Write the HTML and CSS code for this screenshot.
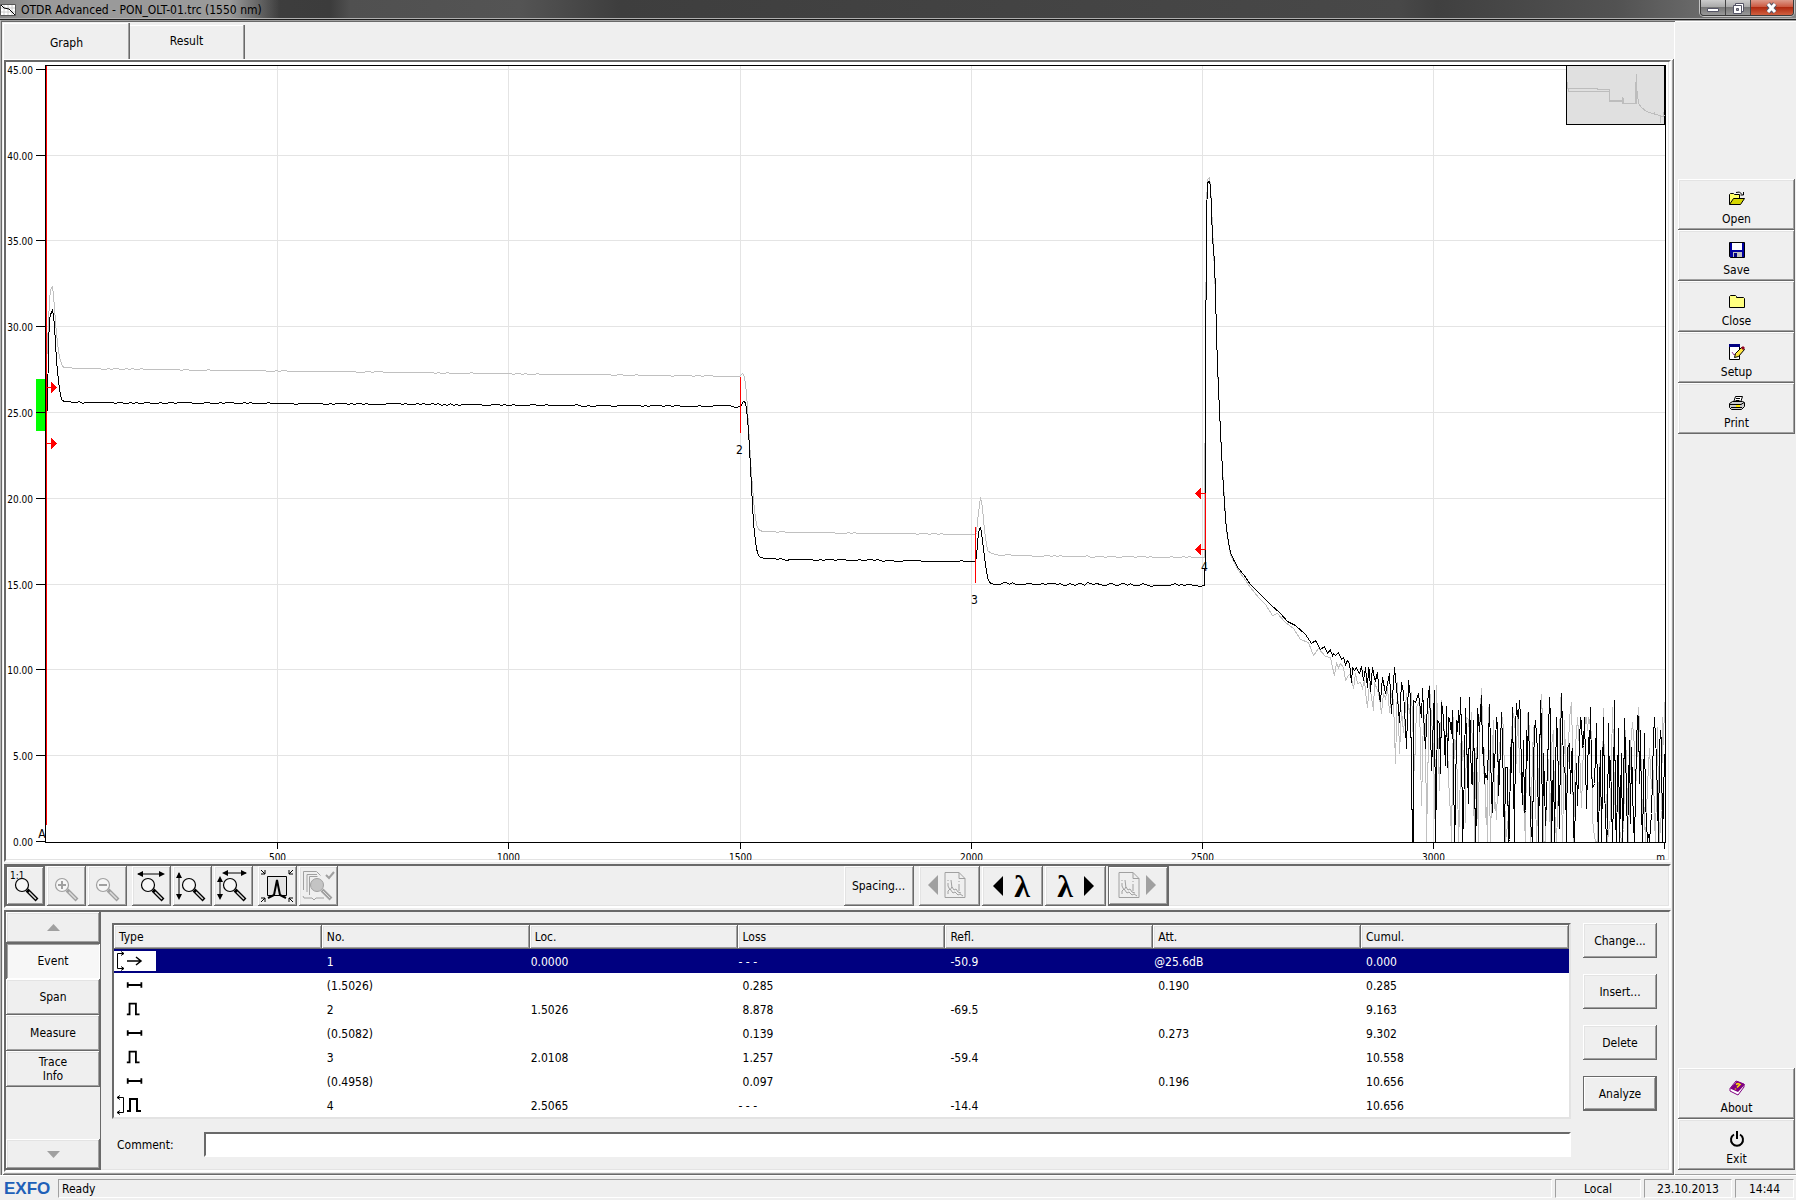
FILE: index.html
```html
<!DOCTYPE html>
<html lang="en">
<head>
<meta charset="utf-8">
<title>OTDR Advanced - PON_OLT-01.trc (1550 nm)</title>
<link rel="stylesheet" href="styles.css">
</head>
<body>
<svg class="defs" width="0" height="0" aria-hidden="true">
  <symbol id="lens" viewBox="0 0 34 34">
    <circle cx="15" cy="15" r="6.500" fill="#f6f6f6" stroke="currentColor" stroke-width="1.200"/>
    <path d="M20 20l10 10" stroke="currentColor" stroke-width="4"/>
    <path d="M22 22l7 7" stroke="#ddd" stroke-width="1.500"/>
  </symbol>
  <symbol id="trace-page" viewBox="0 0 24 28">
    <path d="M2 1.500h14l6 6v19H2zM16 1.500v6h6" fill="none" stroke="currentColor"/>
    <path d="M5 9v1M16 10v1M5 12v3l2 4 2-3 2 3 2-1 2 3 3 1M5 23v-3l2-2 3 4 2-1 3 3 2-1 3 2M8 9l1 8M16 13v7" fill="none" stroke="currentColor"/>
  </symbol>
  <symbol id="span" viewBox="0 0 44 22"><path d="M14 8v6M29 8v6M14 11h15" fill="none" stroke="currentColor" stroke-width="2"/></symbol>
  <symbol id="pulse" viewBox="0 0 44 22"><path d="M13 17h3V5h7v12h4" fill="none" stroke="currentColor" stroke-width="2"/></symbol>
</svg>
<div class="window">
  <header class="titlebar">
    <svg class="app-icon" viewBox="0 0 16 12"><path fill="#fff" stroke="#555" d="M.5.5h15v11H.5z"/><path d="M4 1v10M8 1v10M12 1v10M1 4h14M1 8h14" stroke="#ccc"/><path d="M1 1l3 3 5 1 3 3 3 3" fill="none" stroke="#000"/></svg>
    <h1>OTDR Advanced - PON_OLT-01.trc (1550 nm)</h1>
    <div class="controls">
      <button aria-label="Minimize"><svg viewBox="0 0 24 14"><path d="M6.500 7.500h11v3h-11z" fill="#fff" stroke="#555566"/></svg></button>
      <button aria-label="Restore"><svg viewBox="0 0 24 14"><path d="M9.500 2.500h8v8h-8z" fill="#fff" stroke="#555566"/><path d="M7.500 4.500h8v8h-8z" fill="#fff" stroke="#555566"/><path d="M10.500 7.500h2v2h-2z" fill="#999" stroke="#555566"/></svg></button>
      <button class="close" aria-label="Close window"><svg viewBox="0 0 24 14"><path d="M8 3l7 8M15 3l-7 8" stroke="#555566" stroke-width="5"/><path d="M8 3l7 8M15 3l-7 8" stroke="#fff" stroke-width="3"/></svg></button>
    </div>
  </header>

  <div class="workspace">
    <main>
      <nav class="tabs">
        <button class="tab active">Graph</button>
        <button class="tab">Result</button>
      </nav>
      <div class="sheet">
        <section class="panel chart"><svg id="chart" role="img" aria-label="Trace graph"></svg></section>

        <section class="panel toolbar">
          <div class="tools">
            <button class="btn tool default" aria-label="Zoom 1:1"><svg viewBox="0 0 38 38"><text x="4" y="12" font-size="10">1:1</text><use href="#lens" x="1" y="3" width="34" height="34"/></svg></button>
            <button class="btn tool off" aria-label="Zoom in"><svg viewBox="0 0 38 38"><use href="#lens" y="3" width="34" height="34"/><path d="M11 18h8M15 14v8" stroke="currentColor" stroke-width="2"/></svg></button>
            <button class="btn tool off" aria-label="Zoom out"><svg viewBox="0 0 38 38"><use href="#lens" y="3" width="34" height="34"/><path d="M11 18h8" stroke="currentColor" stroke-width="2"/></svg></button>
          </div>
          <div class="tools">
            <button class="btn tool" aria-label="Horizontal zoom"><svg viewBox="0 0 38 38"><use href="#lens" x="1" y="3" width="34" height="34"/><path d="M6 7h25" stroke="#000"/><path d="M5 7l6-3v6zM33 7l-6-3v6z"/></svg></button>
            <button class="btn tool" aria-label="Vertical zoom"><svg viewBox="0 0 38 38"><use href="#lens" x="1" y="3" width="34" height="34"/><path d="M6 6v25" stroke="#000"/><path d="M6 5l-3 6h6zM6 33l-3-6h6z"/></svg></button>
            <button class="btn tool" aria-label="Area zoom"><svg viewBox="0 0 38 38"><use href="#lens" x="1" y="3" width="34" height="34"/><path d="M6 11v20M10 6h22" stroke="#000"/><path d="M6 9l-3 6h6zM6 33l-3-6h6zM8 6l6-3v6zM33 6l-6-3v6z"/></svg></button>
          </div>
          <div class="tools">
            <button class="btn tool" aria-label="Zoom on event"><svg viewBox="0 0 38 38"><path d="M9.500 9.500h19v19h-19z" fill="#e4e4e4" stroke="#000"/><path d="M10 31l6-3 3-15 3 15 6 3" fill="none" stroke="#000" stroke-width="2"/><path d="M3 3l4 4M7 3v4H3M35 3l-4 4M31 3v4h4M3 35l4-4M7 35v-4H3M35 35l-4-4M31 35v-4h4" fill="none" stroke="#000"/></svg></button>
            <button class="btn tool off" aria-label="Check traces"><svg viewBox="0 0 38 38"><path d="M4.500 23V4.500h13l4 4M8 25V7.500h10M10.500 28V9.500h8M4 29l1 2h8l2 2 2-2h8" fill="none" stroke="currentColor"/><circle cx="18" cy="18" r="6.500" fill="#c4c4c4" stroke="currentColor"/><path d="M23 23l9 9" stroke="currentColor" stroke-width="4"/><path d="M24 24l7 7" stroke="#ddd"/><path d="M27 8l3 3 5-6" fill="none" stroke="currentColor" stroke-width="2"/></svg></button>
          </div>
          <div class="tools centre">
            <button class="btn spacing">Spacing...</button>
            <button class="btn step off" aria-label="Previous trace"><svg class="arrow" viewBox="0 0 10 20"><path d="M10 0v20L0 10z" fill="currentColor"/></svg><svg class="page"><use href="#trace-page"/></svg></button>
            <button class="btn step wave" aria-label="Previous wavelength"><svg class="arrow" viewBox="0 0 10 20"><path d="M10 0v20L0 10z"/></svg><span class="lambda">λ</span></button>
            <button class="btn step wave" aria-label="Next wavelength"><span class="lambda">λ</span><svg class="arrow" viewBox="0 0 10 20"><path d="M0 0v20l10-10z"/></svg></button>
            <button class="btn step off default" aria-label="Next trace"><svg class="page"><use href="#trace-page"/></svg><svg class="arrow" viewBox="0 0 10 20"><path d="M0 0v20l10-10z" fill="currentColor"/></svg></button>
          </div>
        </section>

        <section class="panel details">
          <nav class="views">
            <button class="btn scroll" aria-label="Scroll up"><svg viewBox="0 0 13 7"><path d="M0 7l6.500-7L13 7z"/></svg></button>
            <button class="btn view selected">Event</button>
            <button class="btn view">Span</button>
            <button class="btn view">Measure</button>
            <button class="btn view">Trace<br>Info</button>
            <button class="btn scroll last" aria-label="Scroll down"><svg viewBox="0 0 13 7"><path d="M0 0h13L6.500 7z"/></svg></button>
          </nav>
          <div class="events">
            <div class="table-frame">
              <table>
                <thead><tr><th>Type</th><th>No.</th><th>Loc.</th><th>Loss</th><th>Refl.</th><th>Att.</th><th>Cumul.</th></tr></thead>
                <tbody>
                  <tr class="selected"><td><svg class="type" viewBox="0 0 42 20"><path d="M10 2.500H3.500v15H10M7 .5l3 2-3 2M7 15.500l3 2-3 2" fill="none" stroke="#000"/><path d="M13 10h14M22 6l5 4-5 4" fill="none" stroke="#000" stroke-width="1.500"/></svg></td><td>1</td><td>0.0000</td><td class="none">- - -</td><td>-50.9</td><td class="at">@25.6dB</td><td>0.000</td></tr>
                  <tr><td><svg class="type"><use href="#span"/></svg></td><td>(1.5026)</td><td></td><td>0.285</td><td></td><td>0.190</td><td>0.285</td></tr>
                  <tr><td><svg class="type"><use href="#pulse"/></svg></td><td>2</td><td>1.5026</td><td>8.878</td><td>-69.5</td><td></td><td>9.163</td></tr>
                  <tr><td><svg class="type"><use href="#span"/></svg></td><td>(0.5082)</td><td></td><td>0.139</td><td></td><td>0.273</td><td>9.302</td></tr>
                  <tr><td><svg class="type"><use href="#pulse"/></svg></td><td>3</td><td>2.0108</td><td>1.257</td><td>-59.4</td><td></td><td>10.558</td></tr>
                  <tr><td><svg class="type"><use href="#span"/></svg></td><td>(0.4958)</td><td></td><td>0.097</td><td></td><td>0.196</td><td>10.656</td></tr>
                  <tr><td><svg class="type" viewBox="0 0 42 20"><path d="M3 2.500h6.500v15H3M6 .5l-3 2 3 2M6 15.500l-3 2 3 2" fill="none" stroke="#000"/><path d="M13 16h3V4h7v12h4" fill="none" stroke="#000" stroke-width="2"/></svg></td><td>4</td><td>2.5065</td><td class="none">- - -</td><td>-14.4</td><td></td><td>10.656</td></tr>
                </tbody>
              </table>
            </div>
            <div class="comment"><label for="comment">Comment:</label><input id="comment" type="text"></div>
          </div>
          <div class="actions">
            <button class="btn">Change...</button>
            <button class="btn">Insert...</button>
            <button class="btn">Delete</button>
            <button class="btn default">Analyze</button>
          </div>
        </section>
      </div>
    </main>

    <aside>
      <button class="btn cmd"><svg viewBox="0 0 16 16"><path d="M.5 13.500v-10l1-1h3l1 1h5v4" fill="#ffff66" stroke="#000"/><path d="M.5 13.500l4-6h11l-4 6z" fill="#d6d600" stroke="#000"/><path d="M7 1.500q4-2 6 2M14.500 1v3h-3" fill="none" stroke="#000"/></svg>Open</button>
      <button class="btn cmd"><svg viewBox="0 0 16 16"><path d="M.5.5h15v15h-14l-1-1z" fill="#0000a0" stroke="#000"/><path d="M3 1h10v7H3z" fill="#fff"/><path d="M4 10h9v5H4z" fill="#c0c0c0"/><path d="M5 11h3v4H5z" fill="#000080"/></svg>Save</button>
      <button class="btn cmd"><svg viewBox="0 0 16 16"><path d="M.5 14.500v-11l1-1h5l1 1v1h7l1 1v9z" fill="#ffff80" stroke="#000"/></svg>Close</button>
      <button class="btn cmd"><svg viewBox="0 0 16 16"><path d="M.5.500h10v15H.5z" fill="#fff" stroke="#000"/><path d="M0 0h11v3H0z" fill="#000080"/><path d="M3 8l2 3 5-5" fill="none" stroke="#a040a0"/><path d="M5.500 13.500l1-4 6-6 3 2-6 7z" fill="#ffe640" stroke="#000"/><path d="M12 4l2-2 2 2-2 2z" fill="#900020"/></svg>Setup</button>
      <button class="btn cmd"><svg viewBox="0 0 16 16"><path d="M4.500 7.500l2-6h7l-2 6z" fill="#fff" stroke="#000"/><path d="M7 3.500h4M6.500 5.500h4" stroke="#000"/><path d="M.5 8.500l3-2h10l2 1v4l-3 3h-10l-2-2z" fill="#ccc" stroke="#000"/><path d="M1 9.500h11l3-2M2 12.500h11" fill="none" stroke="#000"/><path d="M7 10h4v2H7z" fill="#ffe600"/></svg>Print</button>
      <button class="btn cmd bottom"><svg viewBox="0 0 16 16"><path d="M1 8.500L7 1l8 3v3l-6 8-8-4z" fill="#fff" stroke="#800080"/><path d="M1 8.500L8 1l8 3.500-7 7.500z" fill="#800080"/><path d="M7 4.500l2-1 2 1-2 2-1 1M6.500 8.500v1" fill="none" stroke="#ffe600" stroke-width="1.500"/></svg>About</button>
      <button class="btn cmd"><svg viewBox="0 0 16 16"><path d="M5 3.500a6 6 0 1 0 6 0M8 0v8" fill="none" stroke="#000" stroke-width="2"/></svg>Exit</button>
    </aside>
  </div>

  <footer>
    <strong class="brand">EXFO</strong>
    <span class="cell message">Ready</span>
    <span class="cell place">Local</span>
    <span class="cell date">23.10.2013</span>
    <span class="cell time">14:44</span>
  </footer>
</div>
<script src="chart.js"></script>
</body>
</html>
```
FILE: styles.css
```css
:root {
  --face: #efefef;
  --light: #e3e3e3;
  --shade: #a0a0a0;
  --dark: #696969;
  --raised: inset -1px -1px var(--dark), inset 1px 1px #fff, inset -2px -2px var(--shade), inset 2px 2px var(--light);
}
* { box-sizing: border-box; }
body {
  margin: 0;
  font: 12px/16px "DejaVu Sans Condensed", "Noto Sans", sans-serif;
  color: #000;
  background: var(--face);
}
button, input { font: inherit; color: inherit; }
button { border: 0; padding: 0; background: var(--face); }
svg { display: block; }
.defs { position: absolute; }

.window { display: flex; flex-direction: column; min-height: 100vh; }

/* Title bar */
.titlebar {
  display: flex;
  align-items: center;
  height: 20px;
  padding-right: 2px;
  border-bottom: 1px solid #1c1c1c;
  box-shadow: inset 0 -1px #b0b0b0;
  background:
    linear-gradient(90deg, #868686, #9a9a9a 40px, #9a9a9a 230px, transparent 280px),
    linear-gradient(90deg, #444 0, #3c3c3c 330px, #505050 350px, #545454 520px, #3e3e3e 620px, #484848 1400px, #404040 80%, #525252 90%, #858585);
}
.app-icon { width: 16px; height: 12px; }
h1 { margin: 0 0 0 5px; flex: 1; font: inherit; }
.controls {
  display: flex;
  align-self: flex-start;
  height: 16px;
  border: 1px solid #3a3a3a;
  border-top: 0;
  border-radius: 0 0 4px 4px;
  overflow: hidden;
  box-shadow: 0 0 0 1px #c4c4c4;
}
.controls button {
  width: 25px;
  border-right: 1px solid #444;
  background: linear-gradient(#ccc, #aaa 45%, #777 50%, #999);
}
.controls .close { width: 42px; border: 0; background: linear-gradient(#dd9a8a, #cc5a42 45%, #b02a10 50%, #d06040); }
.controls svg { width: 24px; height: 14px; margin: auto; }

/* Main area */
.workspace { flex: 1; display: flex; }
main {
  flex: 1;
  min-width: 0;
  display: flex;
  flex-direction: column;
  padding: 2px 1px 0 3px;
  box-shadow: inset 1px 0 #b4b4b4, inset 0 1px var(--shade), inset 2px 2px var(--dark), inset -1px 0 #fff;
}
.tabs { display: flex; height: 37px; padding-top: 1px; }
.tab { box-shadow: inset -1px 0 var(--dark), inset -2px 0 var(--shade), inset 0 1px #fff; }
.tab.active { width: 127px; padding-top: 4px; box-shadow: inset -1px 0 var(--dark), inset -2px 0 var(--shade), inset 1px 1px #fff; }
.tab:not(.active) { width: 115px; height: 34px; margin-top: 2px; padding: 0 2px 2px 0; }
.sheet {
  flex: 1;
  display: flex;
  flex-direction: column;
  gap: 2px;
  padding: 1px 3px 3px 1px;
  box-shadow: inset -1px -1px var(--dark), inset 1px 1px #fff, inset -2px -2px var(--shade);
}
.panel {
  border: 2px solid;
  border-color: var(--dark) #fff #fff var(--dark);
  box-shadow: inset -1px -1px var(--light);
}
.chart { flex: 1; min-height: 300px; position: relative; background: #fff; overflow: hidden; }
#chart { position: absolute; inset: 0; width: 100%; height: 100%; font-size: 10px; }

.btn { box-shadow: var(--raised); }
.btn.default { box-shadow: inset 0 0 0 1px var(--dark), inset -2px -2px var(--dark), inset 2px 2px #fff, inset -3px -3px var(--shade); }
.off { color: #a0a0a0; }

/* Toolbar */
.toolbar { display: flex; gap: 5px; height: 44px; }
.tools { display: flex; gap: 2px; }
.tools.centre { margin: 0 auto; }
.tool { width: 39px; }
.tool svg { width: 38px; height: 38px; }
.spacing { width: 70px; margin-right: 3px; }
.step { width: 61px; display: flex; align-items: center; justify-content: center; gap: 5px; padding: 0 4px 2px 0; }
.wave { gap: 10px; padding: 0 2px; }
.arrow { width: 10px; height: 20px; }
.page { width: 24px; height: 28px; }
.lambda { width: 18px; font: bold 32px/36px "Liberation Serif", serif; }

/* Event details */
.details { display: flex; height: 262px; }
.views {
  display: flex;
  flex-direction: column;
  width: 95px;
  border-right: 1px solid var(--dark);
  border-bottom: 1px solid var(--dark);
}
.scroll { height: 30px; }
.scroll:first-child { height: 31px; }
.scroll svg { width: 13px; height: 7px; margin: auto; fill: var(--shade); }
.last { margin-top: auto; }
.view { height: 36px; line-height: 14px; }
.view.selected { background: #f7f7f7; box-shadow: inset 1px 1px var(--dark), inset -1px -1px #fff, inset 2px 2px var(--shade); }
.events { flex: 1; min-width: 0; padding: 11px 12px 0 11px; }
.table-frame { border: 2px solid; border-color: var(--dark) var(--light) var(--light) var(--dark); background: #fff; }
table { width: 100%; table-layout: fixed; border-collapse: collapse; }
th { height: 24px; padding: 0 5px; font-weight: normal; text-align: left; background: var(--face); box-shadow: var(--raised); }
td { height: 24px; padding: 2px 0 0 5px; white-space: nowrap; }
td:first-child { padding: 0; }
td:nth-child(3), td.none, td.at { padding-left: 1px; }
tr.selected { color: #fff; background: #000080; }
.type { width: 42px; height: 20px; color: #000; }
.selected .type { background: #fff; }
.comment { display: flex; align-items: center; margin-top: 13px; }
.comment label { width: 92px; padding-left: 5px; }
.comment input { flex: 1; height: 25px; border: 2px solid; border-color: var(--dark) #fff #fff var(--dark); background: #fff; }
.actions { display: flex; flex-direction: column; gap: 16px; width: 86px; padding: 11px 12px 0 0; }
.actions .btn { height: 35px; }

/* Command bar */
aside { display: flex; flex-direction: column; width: 121px; padding: 158px 1px 5px 3px; border-top: 1px solid var(--shade); box-shadow: inset 0 1px #fff, inset 0 -1px var(--shade); }
.cmd { display: flex; flex-direction: column; align-items: center; gap: 4px; height: 51px; padding-top: 12px; }
.cmd svg { width: 16px; height: 16px; }
.bottom { margin-top: auto; }

/* Status bar */
footer { display: flex; align-items: center; gap: 3px; height: 25px; padding: 1px 2px 0 4px; border-top: 1px solid #fff; }
.brand { width: 51px; font: bold 17px/17px "Liberation Sans", sans-serif; color: #2060b8; }
.cell { height: 19px; padding: 1px 3px; text-align: center; border: 1px solid; border-color: var(--shade) #fff #fff var(--shade); }
.message { flex: 1; text-align: left; }
.place { width: 86px; }
.date { width: 88px; }
.time { width: 59px; }
```
FILE: chart.js
```js
const svg = document.getElementById('chart');

// Trace samples, in plot units (1619 wide, 777 high), up to the start of the noise floor.
const trace1550 = [[0,350],[1,341],[2,278],[3,255],[4,249],[5,247],[6,244],[7,250],[8,261],[9,278],[10,295],[11,305],[12,316],[13,323],[14,329],[15,334],[16,335],[18,336],[30,337],[254,338],[694,341],[695,339],[697,336],[699,337],[700,343],[701,353],[702,365],[703,383],[704,402],[705,421],[706,440],[707,457],[708,467],[709,476],[710,483],[711,487],[712,490],[714,492],[719,493],[744,494],[929,496],[930,491],[931,478],[932,468],[933,463],[934,462],[935,467],[937,483],[939,499],[941,512],[943,517],[945,518],[1054,519],[1158,520],[1159,487],[1159,322],[1160,152],[1161,117],[1163,116],[1164,120],[1165,145],[1166,173],[1167,183],[1168,197],[1169,228],[1170,268],[1171,300],[1172,323],[1173,345],[1174,366],[1175,386],[1176,405],[1177,423],[1178,438],[1179,453],[1180,463],[1182,477],[1184,487],[1187,494],[1192,503],[1197,509],[1204,519],[1214,529],[1224,539],[1234,548],[1241,556],[1249,560],[1259,569],[1265,578],[1269,575],[1274,584],[1278,581],[1281,588],[1284,584]];
const traceOther = [[0,300],[3,235],[4,225],[5,222],[6,221],[7,230],[8,242],[9,257],[11,278],[13,292],[16,301],[18,302],[32,303],[114,304],[194,305],[693,311],[694,310],[696,308],[698,311],[700,327],[702,360],[705,409],[708,445],[710,459],[712,464],[716,466],[754,467],[929,469],[930,467],[932,447],[934,432],[936,442],[938,465],[941,485],[945,488],[954,490],[1158,492],[1158,462],[1159,300],[1160,140],[1161,114],[1163,112],[1164,120],[1167,183],[1169,230],[1171,302],[1175,388],[1180,465],[1184,489],[1192,505],[1204,522],[1212,532],[1219,539],[1226,550],[1231,548],[1239,557],[1247,563],[1254,574],[1262,577],[1267,590],[1272,583],[1279,591],[1284,592]];
// Noise floor, at three samples per plot unit, from plot position (1284, 555).
const noise1550 = [0,90,5,105,10,98,15,104,25,95,32,118,38,110,45,132,52,120,57,130,62,185,66,140,72,150,78,140,84,155,88,160,93,137,100,180,104,140,110,200,115,145,118,150,121,212,127,142,131,175,135,180,142,155,148,235,151,240,157,170,164,218,172,190,178,160,184,280,193,142,200,230,206,305,214,185,218,215,224,320,227,383,234,180,240,230,244,464,247,664,248,664,250,240,255,245,265,218,272,290,277,205,281,340,284,385,290,245,298,198,304,450,312,210,316,664,322,300,326,310,331,460,334,245,341,370,347,258,352,440,358,295,365,270,371,664,377,300,383,270,389,230,396,664,404,265,409,350,414,550,418,232,424,490,430,300,436,664,442,265,452,225,457,400,460,380,466,460,478,252,486,575,490,400,493,440,497,290,504,525,512,275,521,664,526,440,533,664,541,380,547,262,551,664,559,250,562,285,568,240,574,480,580,360,586,570,589,330,592,420,595,275,606,664,612,330,616,300,625,664,629,240,637,664,640,400,646,615,656,230,661,290,664,664,668,420,673,664,678,290,686,625,694,220,700,430,707,664,716,370,719,520,724,400,730,640,733,664,737,430,742,555,746,360,754,305,757,380,763,290,769,565,773,350,779,262,785,500,792,490,797,310,804,664,811,390,814,664,818,290,827,664,833,310,838,500,841,420,845,664,853,240,859,664,864,325,868,664,873,400,877,664,883,295,892,664,896,360,901,610,904,380,913,664,921,285,927,490,930,330,937,664,942,340,950,664,958,664,966,470,973,292,980,540,985,664,991,330,997,664,1004,400];
const noiseOther = [0,110,6,140,12,165,18,130,24,140,30,130,40,140,46,180,54,165,60,160,68,205,74,160,82,190,90,185,96,205,102,180,108,240,112,260,118,190,124,230,128,270,133,185,140,210,146,230,152,280,158,220,164,235,170,200,176,275,182,220,188,240,196,430,202,185,208,400,212,270,220,335,228,220,236,280,244,215,252,450,258,260,266,240,272,555,279,280,284,300,289,664,297,195,308,390,316,664,319,195,328,510,334,240,345,415,352,380,356,540,362,664,370,290,376,360,380,470,384,664,392,300,397,420,404,605,409,290,417,340,424,275,431,664,439,380,443,664,452,205,458,460,464,590,470,664,475,260,481,664,488,300,494,545,503,420,512,310,520,330,526,664,540,400,550,280,558,430,562,270,568,455,580,540,585,664,592,280,600,664,610,320,618,664,632,222,640,664,650,420,660,664,668,330,678,664,689,230,697,664,703,300,712,470,722,245,730,664,741,290,752,560,764,290,772,330,778,300,785,590,795,664,806,430,812,664,818,265,826,605,832,664,847,262,857,664,862,450,872,664,885,330,895,664,906,305,915,520,925,260,935,590,945,664,958,385,968,450,975,664,980,320,988,664,995,290,1001,245,1004,300];

let seed = 7;
function random() {
  seed = (seed * 16807) % 2147483647;
  return seed / 2147483647 - 0.5;
}

function samples(points, noise, jitter) {
  const out = [points[0]];
  for (let i = 1; i < points.length; i++) {
    const [x0, y0] = points[i - 1], [x1, y1] = points[i];
    // Long level stretches carry a one-pixel ripple.
    if (x1 - x0 > 20) {
      for (let x = x0 + 3; x < x1 - 3; x += 3) {
        const y = y0 + (y1 - y0) * (x - x0) / (x1 - x0);
        out.push([x, y + random() * jitter * (x > 940 ? 2 : 1)]);
      }
    }
    out.push([x1, y1]);
  }
  for (let i = 0; i < noise.length; i += 2) {
    const x = noise[i], y = noise[i + 1];
    // The deep part of the floor swings once more between listed samples.
    if (x > 340 && x - noise[i - 2] > 5) {
      const mid = (y + noise[i - 1]) / 2 + random() * 300;
      out.push([1284 + (x + noise[i - 2]) / 6, 555 + Math.max(290, Math.min(664, mid)) / 3]);
    }
    out.push([1284 + x / 3, 555 + y / 3]);
  }
  return out;
}
const black = samples(trace1550, noise1550, 1.4);
const grey = samples(traceOther, noiseOther, 0.7);

function draw() {
  const W = svg.clientWidth, H = svg.clientHeight;
  const left = 39, top = 3, right = W - 4, bottom = H - 18;
  const kx = (right - left) / 1620, ky = (bottom - top) / 777;
  const X = x => Math.round(left + 1 + x * kx) + 0.5;
  const Y = y => Math.round(top + y * ky) + 0.5;
  const line = pts => pts.map(([x, y]) => X(x) + ',' + Y(y)).join(' ');
  const seg = (x1, y1, x2, y2, c) => `<path d="M${x1} ${y1}L${x2} ${y2}" stroke="${c}"/>`;
  let s = '<g fill="none" shape-rendering="crispEdges">';
  const xs = [1, 2, 3, 4, 5, 6].map(i => X(i * 231.2));
  const ys = [0, 1, 2, 3, 4, 5, 6, 7, 8, 9].map(i => Y(776 - i * 85.8));
  xs.forEach(x => s += seg(x, top, x, bottom, '#e4e4e4'));
  ys.slice(1).forEach(y => s += seg(left, y, right, y, '#e4e4e4'));
  s += `<rect x="${left - 9}" y="${Y(313)}" width="9" height="${Math.round(52 * ky)}" fill="#0f0"/>`;
  s += `<polyline points="${line(grey)}" stroke="#c0c0c0"/><polyline points="${line(black)}" stroke="#000"/>`;
  s += `<rect x="${left}.5" y="${top}.5" width="${right - left}" height="${bottom - top}" stroke="#000"/>`;
  ys.forEach(y => s += seg(left - 9, y, left, y, '#000'));
  xs.concat(right - 0.5).forEach(x => s += seg(x, bottom, x, bottom + 7, '#000'));
  s += seg(X(0), top + 1, X(0), Y(759), '#f00');
  s += seg(X(694), Y(311), X(694), Y(367), '#f00') + seg(X(929), Y(461), X(929), Y(517), '#f00') + seg(X(1159), Y(428), X(1159), Y(484), '#f00');
  [322, 378].forEach(y => s += `<path d="M${X(0)} ${Y(y)}h5v-5l5 5-5 5v-5" fill="#f00" stroke="#f00"/>`);
  [428, 484].forEach(y => s += `<path d="M${X(1159)} ${Y(y)}h-5v-5l-5 5 5 5v-5" fill="#f00" stroke="#f00"/>`);
  // Overview of the whole trace in the corner.
  const ox = right - 99, oy = top;
  s += `<g transform="translate(${ox} ${oy})"><rect x=".5" y=".5" width="98" height="59" fill="#e0e0e0" stroke="#000"/>
    <path d="M1.500 17v6.500H31.500M2 26.500H43.500v10h13v2h13v-14l1-15v12l2 17 3 4 5 4 6 2 4 1 3 1 3 1 3-1M2.500 23v3M31 24.500h12v11h13l1-3 1 6h12V23M94.500 50v8M88 47v3M97 47v4" stroke="#bdbdbd"/></g>`;
  s += '</g><g>';
  ys.forEach((y, i) => s += `<text x="${left - 12}" y="${y + 4}" text-anchor="end">${(i * 5).toFixed(2)}</text>`);
  xs.forEach((x, i) => s += `<text x="${x}" y="${bottom + 19}" text-anchor="middle">${(i + 1) * 500}</text>`);
  s += `<text x="${right}" y="${bottom + 19}" text-anchor="end">m</text></g><g font-size="12" text-anchor="middle">`;
  s += `<text x="${X(693)}" y="${Y(388)}">2</text><text x="${X(928)}" y="${Y(538)}">3</text><text x="${X(1158)}" y="${Y(505)}">4</text>`;
  s += `<text x="${left - 3}" y="${Y(772)}">A</text></g>`;
  svg.innerHTML = s;
}
draw();
addEventListener('resize', draw);
```
